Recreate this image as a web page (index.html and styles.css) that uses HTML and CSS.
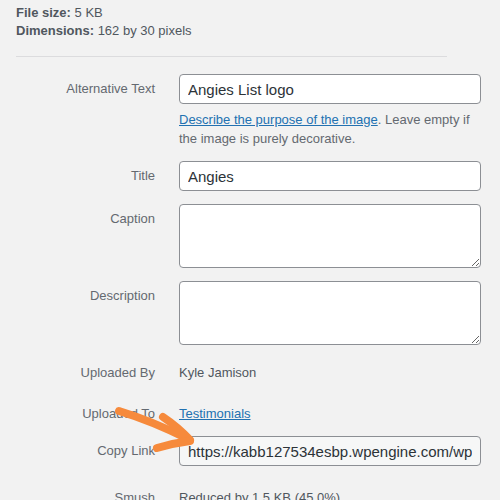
FILE: index.html
```html
<!DOCTYPE html>
<html>
<head>
<meta charset="utf-8">
<link rel="stylesheet" href="styles.css">
</head>
<body>
<div class="page">
  <div class="meta">
    <div><strong>File size:</strong> 5 KB</div>
    <div><strong>Dimensions:</strong> 162 by 30 pixels</div>
  </div>
  <div class="divider"></div>
  <div class="form">
    <label class="lbl">Alternative Text</label>
    <div class="field">
      <input class="inp" type="text" value="Angies List logo">
      <p class="help"><a href="#">Describe the purpose of the image</a>. Leave empty if the image is purely decorative.</p>
    </div>

    <label class="lbl">Title</label>
    <div class="field"><input class="inp" type="text" value="Angies"></div>

    <label class="lbl">Caption</label>
    <div class="field"><textarea class="ta"></textarea></div>

    <label class="lbl">Description</label>
    <div class="field"><textarea class="ta"></textarea></div>

    <span class="lbl text-row r-by">Uploaded By</span>
    <span class="val text-row r-by">Kyle Jamison</span>

    <span class="lbl text-row r-to">Uploaded To</span>
    <span class="val text-row r-to"><a href="#">Testimonials</a></span>

    <label class="lbl">Copy Link</label>
    <div class="field"><input class="inp ro" type="text" readonly value="https://kabb127534esbp.wpengine.com/wp-content/uploads/2021/03/angies-list-logo.png"></div>

    <span class="lbl text-row r-sm">Smush</span>
    <span class="val text-row r-sm">Reduced by 1.5 KB (45.0%)</span>
  </div>

  <svg class="arrow" width="500" height="500" viewBox="0 0 500 500">
    <g fill="none" stroke="#f68a3c" stroke-linecap="round" stroke-linejoin="round">
      <path d="M119 411 Q152 421 188 439" stroke-width="8"/>
      <path d="M163 417 Q178 427 190 440" stroke-width="8"/>
      <path d="M157 448 Q174 443 190 441" stroke-width="8"/>
    </g>
  </svg>
</div>
</body>
</html>
```
FILE: styles.css
```css
html, body {
  margin: 0;
  padding: 0;
  background: #f2f2f2;
}
body {
  font-family: "Liberation Sans", Arial, sans-serif;
  font-size: 13px;
  color: #3c434a;
  width: 500px;
  height: 500px;
  overflow: hidden;
}
.page {
  position: relative;
  width: 500px;
  height: 500px;
  overflow: hidden;
}
.meta {
  padding: 4px 16px 0;
  line-height: 18px;
  color: #50575e;
}
.meta strong {
  color: #50575e;
  font-weight: bold;
}
.divider {
  margin: 16px 0 0 16px;
  width: 431px;
  border-top: 1px solid #dcdcde;
}
.form {
  display: grid;
  grid-template-columns: 155px 302px;
  column-gap: 24px;
  row-gap: 13px;
  margin-top: 17px;
  align-items: start;
}
.lbl {
  text-align: right;
  color: #646970;
  line-height: 18px;
  padding-top: 6px;
}
.val {
  color: #50575e;
  line-height: 18px;
}
.text-row.r-by { padding-top: 6px; }
.text-row.r-to { padding-top: 10px; }
.text-row.r-sm { padding-top: 10px; }
.field {
  display: flex;
  flex-direction: column;
}
.inp, .ta {
  box-sizing: border-box;
  width: 302px;
  border: 1px solid #8c8f94;
  border-radius: 4px;
  background: #fff;
  font-family: "Liberation Sans", Arial, sans-serif;
  color: #2c3338;
  margin: 0;
  outline: none;
}
.inp {
  height: 30px;
  font-size: 15px;
  padding: 0 8px;
}
.inp.ro {
  background: #f6f7f7;
}
.ta {
  height: 64px;
  display: block;
  resize: vertical;
  font-size: 14px;
  padding: 4px 8px;
}
.help {
  margin: 6px 0 0;
  line-height: 19px;
  color: #646970;
}
a {
  color: #2271b1;
  text-decoration: underline;
}
.arrow {
  position: absolute;
  left: 0;
  top: 0;
  pointer-events: none;
}
```
